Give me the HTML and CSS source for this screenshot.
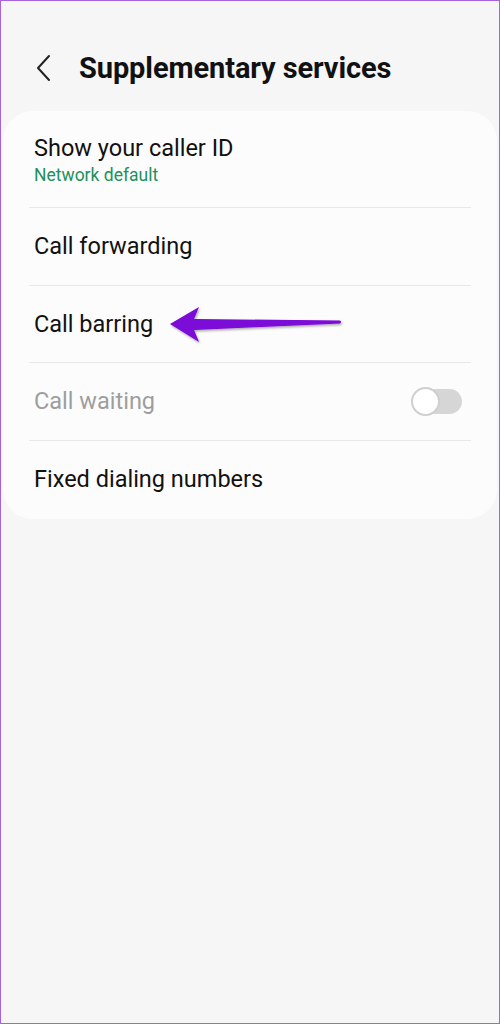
FILE: index.html
```html
<!DOCTYPE html>
<html lang="en">

<head>
    <meta charset="UTF-8">
    <meta name="viewport" content="width=device-width, initial-scale=1.0">
    <title>Supplementary services</title>
    <link rel="stylesheet" href="styles.css">
</head>

<body>
    <div class="screen">
        <div class="header">
            <svg class="back" width="18" height="28" viewBox="0 0 18 28">
                <path d="M14 2 L3 14 L14 26" fill="none" stroke="#222" stroke-width="2" stroke-linecap="round" stroke-linejoin="round"/>
            </svg>
            <h1>Supplementary services</h1>
        </div>

        <div class="card">
            <div class="row first">
                <div class="title">Show your caller ID</div>
                <div class="sub">Network default</div>
            </div>
            <div class="row">
                <div class="title">Call forwarding</div>
            </div>
            <div class="row arrow-row">
                <div class="title">Call barring</div>
                <svg class="arrow" width="190" height="44" viewBox="0 0 190 44">
                    <defs>
                        <filter id="sh" x="-10%" y="-30%" width="120%" height="160%">
                            <feDropShadow dx="1" dy="1.5" stdDeviation="1" flood-color="#000" flood-opacity="0.35"/>
                        </filter>
                    </defs>
                    <path d="M4 23 L33 6 L28 18 L174 19.5 Q176 21 174 22.5 L28 29 L33 41 Z" fill="#7c07d8" filter="url(#sh)"/>
                </svg>
            </div>
            <div class="row disabled">
                <div class="title">Call waiting</div>
                <div class="switch"><span class="knob"></span></div>
            </div>
            <div class="row last">
                <div class="title">Fixed dialing numbers</div>
            </div>
        </div>
    </div>
</body>

</html>
```

FILE: styles.css
```css
html, body {
    margin: 0;
    padding: 0;
}

body {
    font-family: Roboto, "Noto Sans", sans-serif;
    background-color: #f6f6f6;
}

.screen {
    width: 500px;
    height: 1024px;
    box-sizing: border-box;
    border: 1px solid #a862dc;
    background-color: #f6f6f6;
    padding: 0 2px;
}

.header {
    display: flex;
    align-items: center;
    height: 110px;
    padding-left: 32px;
    padding-top: 24px;
    box-sizing: border-box;
}

.back {
    margin-right: 26px;
}

.header h1 {
    margin: 0;
    font-size: 29px;
    font-weight: 700;
    color: #111;
    letter-spacing: -0.1px;
}

.card {
    background-color: #fcfcfc;
    border-radius: 30px;
    padding: 0 26px;
}

.row {
    position: relative;
    display: flex;
    align-items: center;
    height: 76.5px;
    border-bottom: 1px solid #e8e8e8;
    padding: 0 5px;
}

.row.first {
    flex-direction: column;
    align-items: flex-start;
    justify-content: center;
    height: 95px;
    padding-top: 1px;
}

.row.last {
    border-bottom: none;
    height: 77px;
    padding-bottom: 1px;
}

.title {
    font-size: 23.5px;
    color: #111;
}

.sub {
    font-size: 17.5px;
    color: #21905a;
    margin-top: 3px;
}

.disabled .title {
    color: #9e9e9e;
}

.switch {
    position: relative;
    margin-left: auto;
    margin-right: 4px;
    width: 50px;
    height: 25px;
    border-radius: 13px;
    background-color: #d6d6d6;
}

.knob {
    position: absolute;
    left: -1px;
    top: -2px;
    width: 25px;
    height: 25px;
    border-radius: 50%;
    background-color: #fff;
    border: 2px solid #cfcfcf;
}

.arrow {
    position: absolute;
    left: 137px;
    top: 15px;
}
```
